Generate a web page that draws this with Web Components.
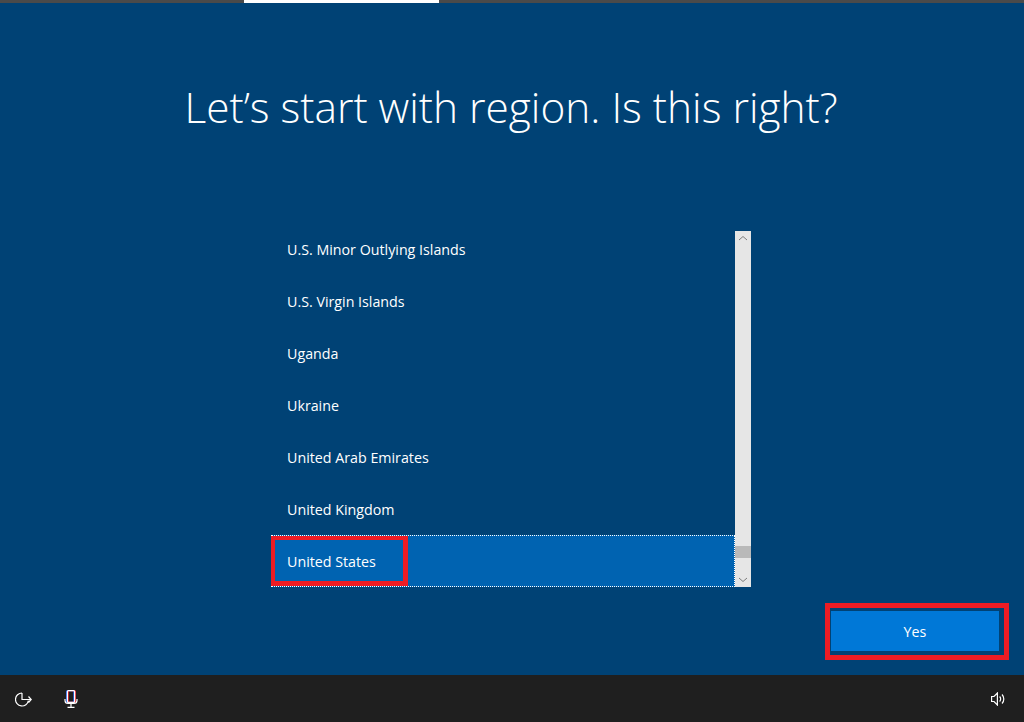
<!DOCTYPE html>
<html>
<head>
<meta charset="utf-8">
<title>Region</title>
<style>
html,body{margin:0;height:100%;background:#004275;overflow:hidden;}
body{font-family:"Open Sans","Noto Sans",sans-serif;}
</style>
</head>
<body>
<oobe-page>
    <oobe-progress slot="progress"></oobe-progress>
    <oobe-title slot="title">Let’s start with region. Is this right?</oobe-title>
    <region-list slot="list">
        <region-item>U.S. Minor Outlying Islands</region-item>
        <region-item>U.S. Virgin Islands</region-item>
        <region-item>Uganda</region-item>
        <region-item>Ukraine</region-item>
        <region-item>United Arab Emirates</region-item>
        <region-item>United Kingdom</region-item>
        <region-item selected marked>United States</region-item>
    </region-list>
    <oobe-button slot="action" marked>Yes</oobe-button>
    <oobe-footer slot="footer"></oobe-footer>
</oobe-page>
<script>
class oobePage extends HTMLElement{
    constructor(){
        super();
        this.attachShadow({mode:'open'});
        this.shadowRoot.innerHTML = `
            <style>
                :host{display:flex;flex-direction:column;width:100%;height:722px;}
                main{flex:1;display:flex;flex-direction:column;min-height:0;}
                .title{height:228px;flex:none;}
                .list{padding-left:271px;height:356px;flex:none;}
                .actions{display:flex;justify-content:flex-end;padding:24px 25px 0 0;}
            </style>
            <slot name="progress"></slot>
            <main>
                <div class="title"><slot name="title"></slot></div>
                <div class="list"><slot name="list"></slot></div>
                <div class="actions"><slot name="action"></slot></div>
            </main>
            <slot name="footer"></slot>
        `;
    }
}

class oobeProgress extends HTMLElement{
    constructor(){
        super();
        this.attachShadow({mode:'open'});
        this.shadowRoot.innerHTML = `
            <style>
                :host{display:block;height:3px;background:#4a4a4a;}
                div{margin-left:244px;width:195px;height:3px;background:#fff;}
            </style>
            <div></div>
        `;
    }
}

class oobeTitle extends HTMLElement{
    constructor(){
        super();
        this.attachShadow({mode:'open'});
        this.shadowRoot.innerHTML = `
            <style>
                :host{display:block;padding:70px 2px 0 0;text-align:center;color:#fff;font-size:42.4px;font-weight:300;line-height:68px;}
            </style>
            <slot></slot>
        `;
    }
}

class regionList extends HTMLElement{
    constructor(){
        super();
        this.attachShadow({mode:'open'});
        this.shadowRoot.innerHTML = `
            <style>
                :host{display:flex;width:480px;height:356px;}
                .items{flex:1;display:flex;flex-direction:column;justify-content:flex-end;overflow:hidden;}
                .bar{width:16px;background:#e6e6e6;display:flex;flex-direction:column;align-items:center;position:relative;}
                svg{display:block;}
                .up{margin-top:4px;}
                .thumb{position:absolute;left:0;right:0;top:315px;height:12px;background:#b9b9b9;}
                .down{margin-top:auto;margin-bottom:4px;}
            </style>
            <div class="items"><slot></slot></div>
            <div class="bar">
                <svg class="up" width="10" height="6" viewBox="0 0 10 6"><path d="M1 5L5 1.5L9 5" fill="none" stroke="#7d7d7d" stroke-width="1"/></svg>
                <div class="thumb"></div>
                <svg class="down" width="10" height="6" viewBox="0 0 10 6"><path d="M1 1L5 4.5L9 1" fill="none" stroke="#7d7d7d" stroke-width="1"/></svg>
            </div>
        `;
    }
}

class regionItem extends HTMLElement{
    constructor(){
        super();
        this.attachShadow({mode:'open'});
        this.shadowRoot.innerHTML = `
            <style>
                :host{display:flex;align-items:center;flex:none;height:52px;box-sizing:border-box;padding-left:16px;color:#fff;font-size:14.25px;position:relative;}
                :host([selected]){background:#0063b1;outline:1px dotted #fff;outline-offset:-1px;}
                .mark{display:none;position:absolute;left:0;top:1px;width:137px;height:50px;box-sizing:border-box;border:solid #ed1c24;border-width:4px 5px 5px 4px;}
                :host([marked]) .mark{display:block;}
            </style>
            <slot></slot>
            <div class="mark"></div>
        `;
    }
}

class oobeButton extends HTMLElement{
    constructor(){
        super();
        this.attachShadow({mode:'open'});
        this.shadowRoot.innerHTML = `
            <style>
                :host{display:block;position:relative;}
                button{display:block;width:168px;height:40px;border:0;padding:0;background:#0078d7;color:#fff;font:inherit;font-size:14.25px;}
                .mark{display:none;position:absolute;left:-6px;top:-8px;width:184px;height:57px;box-sizing:border-box;border:5px solid #ed1c24;pointer-events:none;}
                :host([marked]) .mark{display:block;}
            </style>
            <button><slot></slot></button>
            <div class="mark"></div>
        `;
    }
}

class oobeFooter extends HTMLElement{
    constructor(){
        super();
        this.attachShadow({mode:'open'});
        this.shadowRoot.innerHTML = `
            <style>
                :host{display:flex;align-items:center;flex:none;height:47px;background:#1f1f1f;}
                svg{display:block;fill:none;stroke:#fff;stroke-width:1.2;}
                .ease{margin-left:15px;margin-top:2px;}
                .mic{margin-left:32px;}
                .vol{margin-left:auto;margin-right:19px;}
            </style>
            <svg class="ease" width="17" height="16" viewBox="0 0 17 16"><path d="M7 1A6.500 6.500 0 1 0 13.400 8.600M7 1V7.500H16M13.500 4.500L16.200 7.500L13.500 10.500"/></svg>
            <svg class="mic" width="14" height="18" viewBox="0 0 14 18">
                <rect x="3.400" y=".6" width="7.200" height="11.800" rx="1" stroke="#2a6bff" transform="translate(-.7 0)"/>
                <rect x="3.400" y=".6" width="7.200" height="11.800" rx="1" stroke="#ff2a3a" transform="translate(.7 0)"/>
                <rect x="3.400" y=".6" width="7.200" height="11.800" rx="1"/>
                <path d="M1 9v1.500a3 3 0 0 0 3 3h6a3 3 0 0 0 3-3V9M7 13.500v3.500M3.500 17.400h7"/>
            </svg>
            <svg class="vol" width="14" height="14" viewBox="0 0 14 14">
                <path d="M.6 4.500h2.400L6.400 1V13L3 9.500H.6z"/>
                <path d="M8.600 4.500a3.500 3.500 0 0 1 0 5M11 2.500a6.500 6.500 0 0 1 0 9"/>
            </svg>
        `;
    }
}

customElements.define('oobe-page', oobePage);
customElements.define('oobe-progress', oobeProgress);
customElements.define('oobe-title', oobeTitle);
customElements.define('region-list', regionList);
customElements.define('region-item', regionItem);
customElements.define('oobe-button', oobeButton);
customElements.define('oobe-footer', oobeFooter);
</script>
</body>
</html>
